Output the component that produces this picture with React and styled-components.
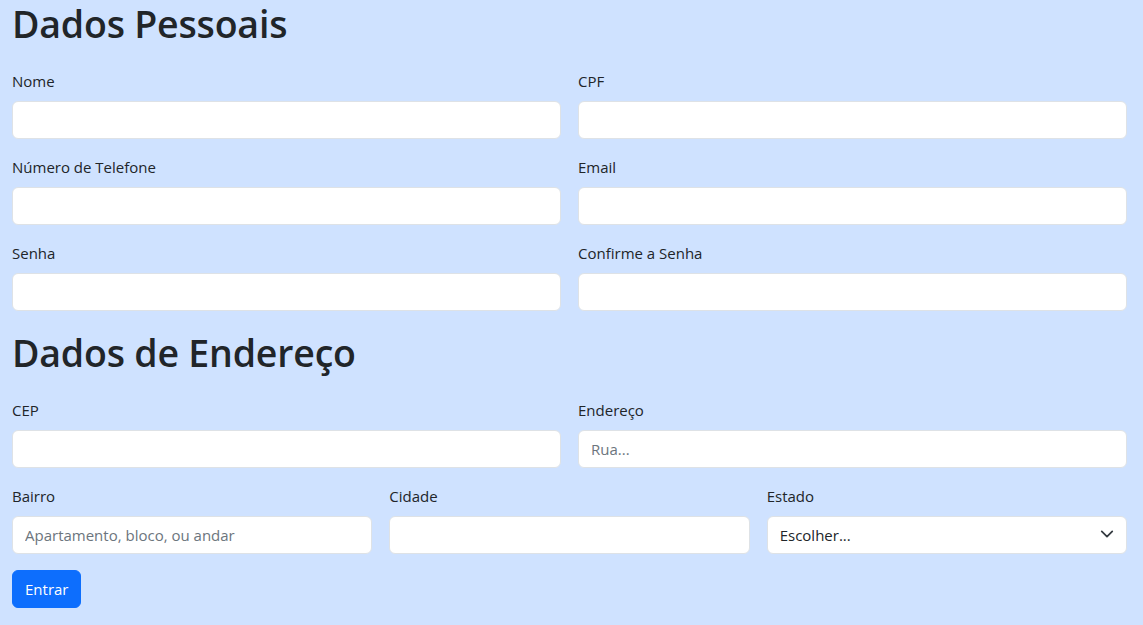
import React from 'react';
import styled, { createGlobalStyle } from 'styled-components';

const GlobalStyle = createGlobalStyle`
  body {
    margin: 0;
    background: #cfe2ff;
    font-family: "Open Sans", "Liberation Sans", sans-serif;
    color: #212529;
  }
`;

const Page = styled.form`
  padding: 0 16px 16px 12px;
  display: flex;
  flex-direction: column;
`;

const Title = styled.h1`
  margin: ${p => p.first ? '0' : '2px'} 0 21px;
  font-size: 37.5px;
  font-weight: 600;
  line-height: 48px;
  letter-spacing: -0.2px;
`;

const Grid = styled.div`
  display: grid;
  grid-template-columns: repeat(${p => p.cols}, 1fr);
  column-gap: 17px;
  row-gap: 16px;
  margin-bottom: 16px;
`;

const Field = styled.div`
  display: flex;
  flex-direction: column;
`;

const Label = styled.label`
  font-size: 15px;
  line-height: 24px;
  margin-bottom: 8px;
`;

const Input = styled.input`
  box-sizing: border-box;
  height: 38px;
  padding: 6px 12px;
  border: 1px solid #dee2e6;
  border-radius: 6px;
  background: #fff;
  font-family: inherit;
  font-size: 15px;
  color: #212529;
  outline: none;
  &::placeholder {
    color: #6c757d;
  }
`;

const SelectWrap = styled.div`
  position: relative;
`;

const Select = styled.select`
  box-sizing: border-box;
  width: 100%;
  height: 38px;
  padding: 6px 36px 6px 12px;
  border: 1px solid #dee2e6;
  border-radius: 6px;
  background: #fff;
  font-family: inherit;
  font-size: 15px;
  color: #212529;
  appearance: none;
  outline: none;
`;

const Chevron = styled.svg`
  position: absolute;
  right: 13px;
  top: 11px;
  width: 14px;
  height: 14px;
  pointer-events: none;
`;

const Button = styled.button`
  align-self: flex-start;
  height: 38px;
  padding: 6px 12px;
  border: 1px solid #0d6efd;
  border-radius: 6px;
  background: #0d6efd;
  color: #fff;
  font-family: inherit;
  font-size: 15px;
`;

const pessoais = [
  'Nome', 'CPF', 'Número de Telefone', 'Email', 'Senha', 'Confirme a Senha',
];

export default function App() {
  return (
    <React.Fragment>
      <GlobalStyle />
      <Page onSubmit={e => e.preventDefault()}>
        <Title first>Dados Pessoais</Title>
        <Grid cols={2}>
          {pessoais.map(label => (
            <Field key={label}>
              <Label>{label}</Label>
              <Input type="text" />
            </Field>
          ))}
        </Grid>

        <Title>Dados de Endereço</Title>
        <Grid cols={2}>
          <Field>
            <Label>CEP</Label>
            <Input type="text" />
          </Field>
          <Field>
            <Label>Endereço</Label>
            <Input type="text" placeholder="Rua..." />
          </Field>
        </Grid>
        <Grid cols={3}>
          <Field>
            <Label>Bairro</Label>
            <Input type="text" placeholder="Apartamento, bloco, ou andar" />
          </Field>
          <Field>
            <Label>Cidade</Label>
            <Input type="text" />
          </Field>
          <Field>
            <Label>Estado</Label>
            <SelectWrap>
              <Select defaultValue="">
                <option value="">Escolher...</option>
              </Select>
              <Chevron viewBox="0 0 16 16">
                <path d="m2 5 6 6 6-6" fill="none" stroke="#343a40" strokeWidth="2" strokeLinecap="round" strokeLinejoin="round" />
              </Chevron>
            </SelectWrap>
          </Field>
        </Grid>
        <Button type="submit">Entrar</Button>
      </Page>
    </React.Fragment>
  );
}
